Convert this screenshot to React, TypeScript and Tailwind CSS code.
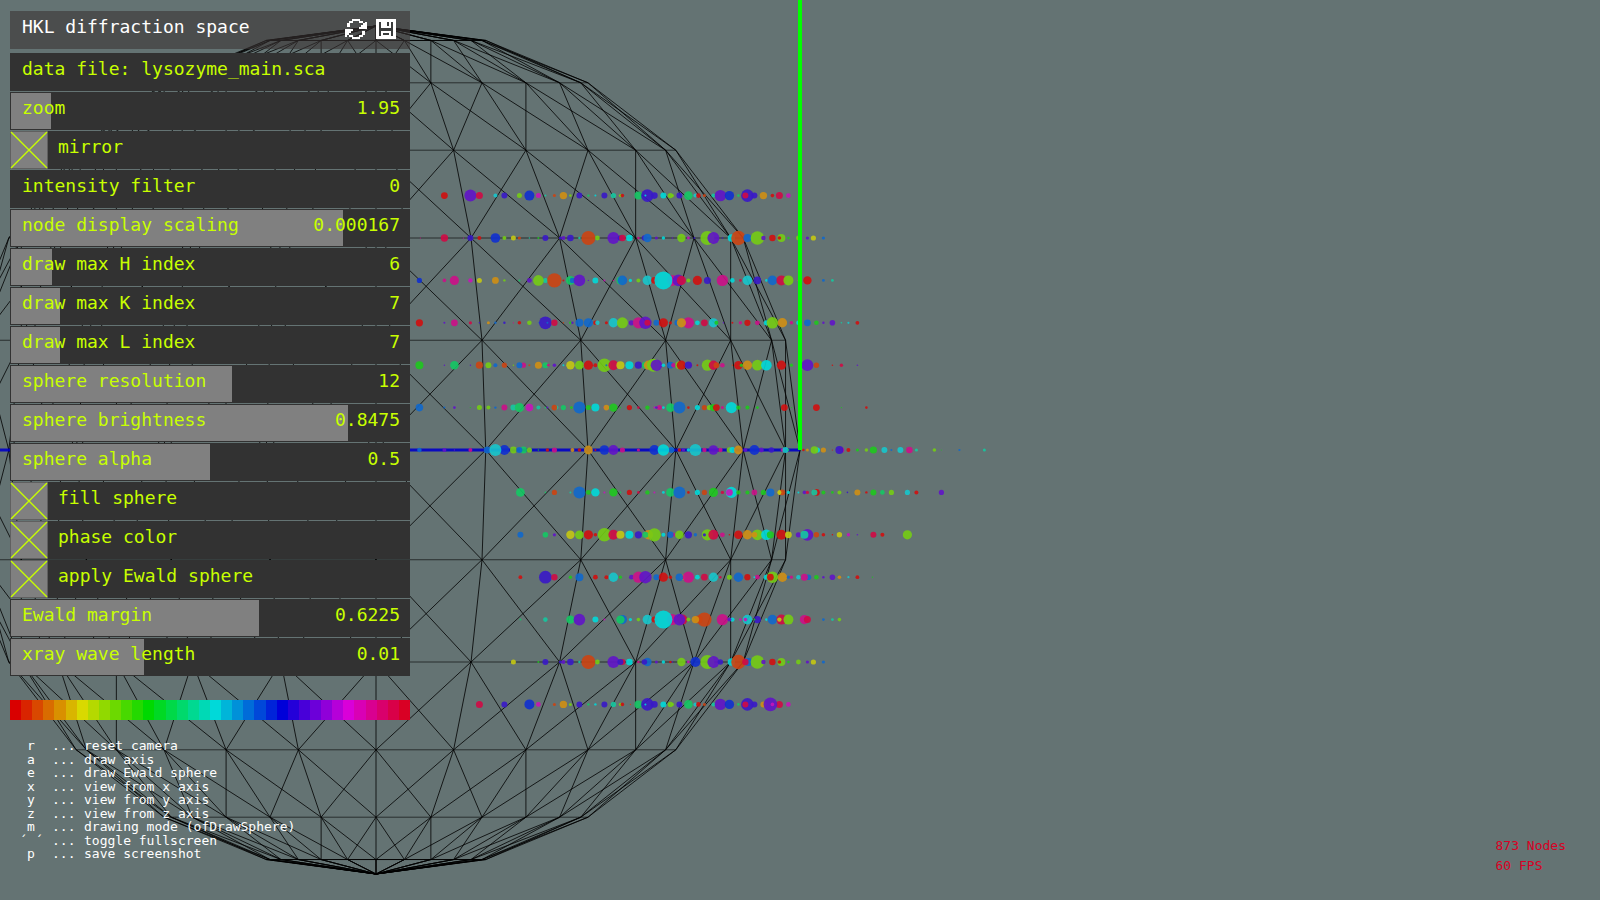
import React, { useState } from "react";

const CX = 376;
const CY = 450;
const RADIUS = 424;
const RINGS = 12;
const ROW_SPACING = 42.4;

const nodeColors: Record<string, string> = {
  r: "#d00f10",
  R: "#d00a45",
  v: "#cc4412",
  o: "#cf8f14",
  y: "#c4c812",
  l: "#74cc14",
  g: "#1ec81e",
  e: "#14c864",
  t: "#14c8a0",
  c: "#00d9d9",
  s: "#16c6cc",
  b: "#1068cc",
  B: "#1030d0",
  i: "#3818c8",
  p: "#6014c8",
  m: "#c814b8",
  k: "#cc1088",
};

// one string per layer, top to bottom; each node is "x,radius,color"
const nodeRows = [
  "444,3.4,r 470,6,p 479,3.5,R 495,2,s 504,3,i 519,2.5,l 529,5,B 538,2.5,m 545,1,t 554,1.5,v 563,3.7,o 570,1.3,l 579,3,i 588,1.2,e 595,1,c 604,3,i 613,2.7,t 620,1.6,l 622,1.8,r 638,4,e 647,6.3,i 645,1,c 654,3.3,i 663,3,c 672,1.6,l 670,2.7,l 679,3,i 688,4.3,e 695,2,s 698,2.3,r 704,1.5,v 713,2,t 720,5.7,p 729,4.7,B 738,1.3,e 747,6.3,i 745,3,R 754,3,i 763,3.7,o 772,1.8,r 779,3.5,R 788,2.3,m",
  "420,.6,k 444,3.7,R 463,.6,m 470,3,i 479,2,r 495,4.8,B 504,2,l 513,2.5,y 519,1.6,v 529,.8,t 538,1,g 545,3,i 560,1.6,i 563,2,p 570,3.3,i 579,1.2,t 588,7,v 597,2.4,l 613,6,p 620,2.7,i 622,3.3,R 629,3.3,c 638,1.3,k 644,2.7,i 647,4.2,b 656,1.5,p 663,1.7,c 672,.8,p 681,4.2,l 688,1.4,m 694,1,i 707,7,l 713,6,p 722,.8,i 731,3.7,c 738,7.2,v 747,4,b 757,6.8,l 763,2.2,p 772,3.2,r 781,4,l 779,1.8,r 788,1.2,g 798,2.4,l 807,1.6,p 813,2.6,y 823,1.6,b",
  "419,2.6,B 444,1.8,k 454,4.6,k 470,2.2,m 479,2.5,y 495,3.4,o 504,1.2,l 519,1,e 529,2.4,p 545,2.5,t 538,5.3,l 554,7.2,v 563,1,r 570,4.5,e 572,2.6,b 579,5.8,p 588,.7,p 597,1.2,v 595,3,c 604,1,m 613,.7,k 620,4,e 622,4.8,b 630,1.6,c 638,2,l 647,4.8,s 654,3.3,r 672,5.5,k 663,9,c 678,5.8,p 681,4.6,R 688,2,l 697,4.6,r 707,3.5,i 722,5.7,k 732,2.3,c 740,1.3,R 747,4.8,s 757,3.8,i 766,1.3,c 772,4.8,b 781,5,R 788,5,l 798,.8,o 807,4.2,r 823,1.4,b 832,1.4,t",
  "419,3.6,r 444,1,p 454,3.4,k 470,1.6,R 479,.8,i 488,1.5,o 495,1.2,b 504,1.2,i 513,.6,k 519,1.8,r 529,2.3,l 539,1,b 545,6.4,i 547,1,b 554,3.2,R 563,.7,v 570,1.4,g 572,1.2,p 579,4,b 588,4.6,b 595,2.2,r 597,2.2,s 606,1.5,r 613,4.7,s 622,5.5,l 631,2.6,p 638,5.6,k 645,6.2,p 647,3,R 656,3,b 663,4.6,r 670,1.6,r 677,3,b 688,5.6,k 681,4.6,o 697,2.4,c 704,3.4,R 713,4.6,s 716,2,g 723,.7,p 732,1,r 740,1.7,k 747,3.1,r 757,2.4,k 766,2.6,c 772,5.8,l 782,4.7,o 791,1.8,k 798,2.2,c 807,3.4,b 816,2.3,g 823,1.2,p 832,2.8,p 841,.8,t 848,1.1,s 857,1.9,r",
  "419,4,g 444,.7,p 454,4.3,e 470,.7,p 479,3.6,v 488,3,l 495,2,b 504,2.6,v 513,.7,l 523,2.6,k 519,3,b 529,1,v 538,3.5,o 545,3,e 548,1.4,k 554,1.8,p 563,1,c 570,4.2,y 579,4.4,l 588,4.6,r 595,2,r 604,6.8,l 606,1,b 613,5,R 620,4,y 629,4,c 638,3.6,i 645,3.6,e 648,4.6,o 653,6.5,l 656,5.8,p 663,1.8,c 670,3.4,b 673,2.2,k 679,4,l 681,4.6,r 690,1.8,k 688,3.6,i 697,1,r 707,5.6,l 713,4.7,R 716,3,v 722,2.3,k 732,.6,v 738,4.3,r 741,1.7,g 747,4.7,o 757,5.4,l 766,5.3,c 781,4.6,r 791,1.6,g 807,5.9,p 816,2.7,v 832,.8,r 841,1.7,R 857,.8,p",
  "419,3.8,b 444,1,b 454,1.4,p 470,.7,g 479,2.5,l 488,2,l 495,1.2,b 504,3,k 513,3,t 519,4.6,e 529,3.8,m 538,2,t 545,.9,e 547,1,p 556,2,t 554,2.8,v 563,2.6,e 571,1.4,g 579,6,b 588,2.5,g 595,4,c 604,1,m 606,2.8,o 613,4.2,g 620,.7,g 629,2.6,r 638,1.3,R 647,2.2,g 654,1,m 659,2.5,k 656,1.4,p 663,1.4,c 670,4.3,e 679,6,b 688,1.3,r 697,2.6,c 704,2.6,v 709,2.6,l 713,3.6,g 716,3.4,r 722,1.5,k 731,5.6,c 738,2.2,g 747,2,g 757,1.4,g 784,3.4,r 791,.7,g 816,3.4,r 841,.6,g 866,1.3,r",
  "419,2.3,b 444,2,p 454,.8,p 470,2,k 487,3.6,b 504,5,B 495,6,s 513,3.4,l 523,3.6,e 519,3,b 529,2.6,l 538,.7,g 547,1.7,r 554,2.6,k 572,2,o 579,1.8,r 588,4.4,o 595,1,r 604,4.8,B 613,5,p 622,2.6,k 638,1.6,k 654,5,B 671,3,b 663,5.8,c 679,1.8,r 683,1.8,p 688,1.7,c 704,2.2,k 695,6,s 713,4.8,p 720,2.2,k 729,2.8,l 732,3,c 738,4.4,o 745,2,p 761,2.4,p 754,5,B 771,2.8,i 782,1.8,k 785,3,s 788,1,e 803,1.3,r 807,1.5,o 817,2.6,c 814,3.8,l 823,2.6,o 832,.6,r 841,2.8,k 839,4,i 848,2,r 857,1.6,g 866,1.8,l 873,3.6,g 884,3,s 891,1,b 900,3,s 909,3.3,k 916,1.6,t 934,1.8,l 941,.5,g 959,1.1,b 984,1.5,t",
  "520,4.4,e 545,.8,e 554,2.6,v 570,1,t 579,6,b 588,2.4,g 595,4.2,c 604,1,m 613,4.2,g 620,.8,e 629,2.6,r 638,1.3,R 647,2.2,g 654,1,m 663,1.4,c 670,4.3,e 679,6,b 688,1.3,r 697,2.6,c 704,2.6,v 713,4.6,g 722,1.7,R 731,5.6,c 729,3.4,m 738,2.2,g 747,2,g 754,2.8,k 763,2.6,g 770,4,b 780,2.7,y 782,2.8,v 779,2,y 788,1.6,c 798,1,c 804,1.8,p 807,1.6,R 816,3.4,r 814,3,t 823,2,g 832,1.3,g 839,2,l 847,.8,i 857,3,o 866,1.2,r 873,3,g 882,2.3,e 891,2.6,l 907,2.6,s 916,2,r 941,2.6,p",
  "520,3,b 545,2.8,e 554,1.6,p 570,4.2,y 579,4.4,l 588,4.6,r 595,1.8,r 604,6.8,l 613,5,R 620,4,y 629,4,c 638,3.6,i 648,4.7,o 645,3,e 654,6.6,l 663,2,c 673,2,k 670,3.2,b 679,4.3,l 688,3.6,i 695,1.7,b 707,5.6,l 704,1.6,i 713,5,R 722,2.4,k 729,.8,r 738,4.3,r 747,4.7,o 757,5.4,l 754,2.8,o 766,5.3,c 770,3.6,g 781,5,r 788,3.4,y 798,2.6,p 807,5.9,p 804,4,t 816,2.7,v 823,1.8,r 832,.8,r 839,2.7,y 848,1.7,m 857,.8,p 873,3,R 882,2,r 907,4.6,l",
  "520,1.9,r 545,6.4,i 554,3.2,R 570,1.7,g 579,4,b 595,2.4,r 606,2,r 613,4.7,s 620,1.6,g 631,2.4,p 638,5.6,k 645,6.2,p 656,3,b 663,4.6,r 670,1.7,r 682,2.8,o 679,3.8,b 688,5.6,k 697,2.4,c 704,3.4,R 713,4.6,s 720,1.2,R 729,2.5,l 738,4.7,b 747,3.1,r 757,2.4,k 754,1,c 766,2.6,c 772,5.8,l 770,3.4,r 782,4.7,o 788,1.6,b 791,1.6,k 798,2.2,s 808,2.8,b 804,3.5,k 816,2.3,g 823,1.2,p 832,2.8,p 839,1.8,o 848,1.1,s 857,1.9,r 872,.6,g",
  "520,1,e 545,2.3,t 570,4.2,e 579,5.8,p 595,3,c 604,1,m 622,4.6,b 620,4.2,e 630,1.6,c 638,1.8,l 647,4.8,s 654,3,r 672,5.5,k 682,5,R 663,9,c 679,5.8,p 688,2,l 704,7.2,v 698,4,v 695,3.7,o 722,5.7,k 732,2.2,c 729,2,p 740,1.3,m 747,4.8,s 745,1.8,m 757,3.6,i 754,1,g 766,1.3,c 772,4.8,b 781,5,R 779,2.2,y 788,5,l 804,4.6,k 807,3.5,R 823,1.4,b 832,1.4,t 839,1.8,l",
  "513,2.5,y 538,1,g 545,3,i 560,1.6,i 563,2,p 570,3.3,i 579,1.2,t 588,7,v 597,2.4,l 613,6,p 622,3,R 620,3,i 629,3.3,c 638,1.3,k 647,4.2,b 644,2.8,i 656,1.5,p 663,1.7,c 670,1.3,r 672,.8,p 681,4.2,l 688,1.4,m 695,5,B 707,7,l 713,6,p 720,2.7,i 731,3.7,c 748,4,b 738,7.2,v 745,3.2,R 757,6.8,l 763,2.2,p 772,3.2,r 781,4,l 779,1.8,r 788,1.2,g 798,2.4,l 807,1.6,p 813,2.6,y 823,1.6,b",
  "479,3.5,R 504,3,i 529,5,B 538,2.4,m 554,1.5,v 563,3.7,o 570,1.5,l 579,3,i 588,1.2,e 595,1.2,c 604,3,i 613,2.7,t 620,1.6,l 622,1.8,r 630,.6,v 638,4,e 647,6.3,i 645,1,c 654,3.3,i 663,3,c 672,1.6,l 670,2.7,l 679,3,i 688,4.3,e 695,2,s 698,2.3,r 704,1.5,v 713,2,t 720,5.7,p 729,4.7,B 738,1.3,e 747,6.3,i 745,3,R 754,3,i 763,3,o 779,3.5,R 770,6.8,p 772,1.8,m 788,2.3,m",
];

const point = (ring: number, seg: number) => {
  const ringRadius = RADIUS * Math.sin((ring * Math.PI) / RINGS);
  const x = CX + ringRadius * Math.sin((seg * Math.PI) / RINGS);
  const y = CY - RADIUS * Math.cos((ring * Math.PI) / RINGS);
  return `${x.toFixed(2)} ${y.toFixed(2)}`;
};

const buildFaces = () => {
  let d = "";
  for (let ring = 0; ring < RINGS; ring++) {
    for (let seg = -6; seg <= 6; seg++) {
      d += `M${point(ring, seg)}L${point(ring + 1, seg)}`;
      if (seg < 6) {
        d += `M${point(ring, seg)}L${point(ring + 1, seg + 1)}`;
        d += `M${point(ring, seg + 1)}L${point(ring + 1, seg)}`;
      }
    }
  }
  return d;
};

// the equator is left out, the z axis runs along it
const buildRings = () =>
  [2, 3, 4, 5, 7, 8, 9, 10].map((ring) => `M${point(ring, -6)}L${point(ring, 6)}`).join("");

const Scene: React.FC = () => (
  <svg
    className="absolute inset-0 h-full w-full"
    viewBox="0 0 1600 900"
    preserveAspectRatio="xMinYMid slice"
    aria-label="Diffraction nodes and Ewald sphere"
  >
    <g fill="none" stroke="#000">
      <path d={buildFaces()} strokeOpacity="0.8" />
      <path d={buildRings()} strokeOpacity="0.6" />
      <path d={`M${point(1, -6)}L${point(1, 6)}M${point(11, -6)}L${point(11, 6)}`} />
    </g>
    <path d="M0 450H800" stroke="#0000c8" strokeWidth="3" strokeOpacity="0.9" />
    {nodeRows.map((nodes, row) => (
      <g key={row} transform={`translate(0.4 ${CY + (row - 6) * ROW_SPACING})`} fillOpacity="0.9">
        {nodes.split(" ").map((node, index) => {
          const [x, r, color] = node.split(",");
          return <circle key={index} cx={x} r={r} fill={nodeColors[color]} />;
        })}
      </g>
    ))}
    <path d="M800 0V450" stroke="#00ff00" strokeWidth="4" />
  </svg>
);

interface SliderProps {
  label: string;
  initial: number;
  min: number;
  max: number;
  digits?: number;
}

const Slider: React.FC<SliderProps> = ({ label, initial, min, max, digits = 0 }) => {
  const [value, setValue] = useState(initial);
  const fill = ((value - min) / (max - min)) * 100;

  return (
    <label className="relative block h-[38px] bg-[#323232] p-px">
      <span className="block h-9 bg-[#808080]" style={{ width: `${fill}%` }} />
      <span className="absolute inset-0 flex justify-between pr-[10px] pl-3 leading-8">
        <span>{label}</span>
        <span>{Number(value.toFixed(digits))}</span>
      </span>
      <input
        type="range"
        className="absolute inset-0 h-full w-full cursor-pointer opacity-0"
        min={min}
        max={max}
        step="any"
        value={value}
        onChange={(e) => setValue(Number(e.target.value))}
      />
    </label>
  );
};

const Toggle: React.FC<{ label: string }> = ({ label }) => {
  const [checked, setChecked] = useState(true);

  return (
    <label className="relative flex h-[38px] cursor-pointer gap-[10px] bg-[#323232] leading-8">
      <input
        type="checkbox"
        className="h-[38px] w-[38px] appearance-none border border-[#606060] bg-[#808080]"
        checked={checked}
        onChange={(e) => setChecked(e.target.checked)}
      />
      {checked && (
        <svg className="pointer-events-none absolute top-0 left-0 h-[38px] w-[38px]" viewBox="0 0 38 38">
          <path d="M1 1L37 37M37 1L1 37" stroke="#c8ff00" strokeWidth="1.4" />
        </svg>
      )}
      <span>{label}</span>
    </label>
  );
};

const HueBar: React.FC = () => (
  <div className="mt-6 flex h-5">
    {Array.from({ length: 36 }, (_, i) => (
      <span key={i} className="flex-1" style={{ backgroundColor: `hsl(${i * 10}, 100%, 42.5%)` }} />
    ))}
  </div>
);

const shortcuts = [
  ["r", "reset camera"],
  ["a", "draw axis"],
  ["e", "draw Ewald sphere"],
  ["x", "view from x axis"],
  ["y", "view from y axis"],
  ["z", "view from z axis"],
  ["m", "drawing mode (ofDrawSphere)"],
  ["´ ´", "toggle fullscreen"],
  ["p", "save screenshot"],
];

const App: React.FC = () => {
  return (
    <div className="relative flex min-h-screen items-end justify-between overflow-hidden bg-[#647373] font-['DejaVu_Sans_Mono',monospace]">
      <Scene />
      <aside className="relative w-[410px] self-start pt-[11px] pl-[10px]">
        <header className="flex h-[38px] justify-between bg-[#3a3434]/60 pr-[14px] pl-3 text-lg leading-8 text-white">
          <h1>HKL diffraction space</h1>
          <div className="flex h-9 items-center gap-[9px]">
            <button type="button" aria-label="Reload settings">
              <svg className="block h-5 w-[22px]" viewBox="0 0 22 20" fill="#fff" shapeRendering="crispEdges">
                <path d="M7 0h8v2h-8zM4 2h4v2h-4zM14 2h4v2h-4zM20 3h2v7h-8v-2h2v-2h2v-2h2zM2 4h3v4h-3zM0 10h8v2h-2v2h-2v2h-2v2h-2zM17 12h3v4h-3zM14 16h4v2h-4zM4 16h4v2h-4zM7 18h8v2h-8z" />
              </svg>
            </button>
            <button type="button" aria-label="Save settings">
              <svg className="block h-5 w-5" viewBox="0 0 20 20" shapeRendering="crispEdges">
                <path fill="#fff" d="M0 0h20v20h-20z" />
                <path fill="#3a3c3c" d="M3 3h2v6h10v-6h2v14h-2v-5h-10v5h-2zM11 3h2v4h-2zM7 14h6v2h-6z" />
              </svg>
            </button>
          </div>
        </header>
        <div className="mt-1 flex flex-col gap-px text-lg text-[#c8ff00]">
          <p className="h-[38px] bg-[#323232] pl-3 leading-8">data file: lysozyme_main.sca</p>
          <Slider label="zoom" initial={1.95} min={1} max={10.5} digits={2} />
          <Toggle label="mirror" />
          <Slider label="intensity filter" initial={0} min={0} max={100} />
          <Slider label="node display scaling" initial={0.000167} min={0} max={0.0002} digits={6} />
          <Slider label="draw max H index" initial={6} min={1} max={50} />
          <Slider label="draw max K index" initial={7} min={1} max={50} />
          <Slider label="draw max L index" initial={7} min={1} max={50} />
          <Slider label="sphere resolution" initial={12} min={2} max={20} />
          <Slider label="sphere brightness" initial={0.8475} min={0} max={1} digits={4} />
          <Slider label="sphere alpha" initial={0.5} min={0} max={1} digits={4} />
          <Toggle label="fill sphere" />
          <Toggle label="phase color" />
          <Toggle label="apply Ewald sphere" />
          <Slider label="Ewald margin" initial={0.6225} min={0} max={1} digits={4} />
          <Slider label="xray wave length" initial={0.01} min={0} max={0.03} digits={4} />
        </div>
        <HueBar />
        <ul className="mt-[19px] flex h-[121px] flex-col justify-between text-[13px] leading-[13px] whitespace-pre text-white">
          {shortcuts.map(([key, action]) => (
            <li key={action} className="flex">
              <kbd className="w-[42px] text-center font-['DejaVu_Sans_Mono',monospace]">{key}</kbd>
              <span className="w-8">...</span>
              <span>{action}</span>
            </li>
          ))}
        </ul>
      </aside>
      <div className="relative pr-[34px] pb-6 text-[13px] leading-5 text-[#d90024]">
        <p>873 Nodes</p>
        <p>60 FPS</p>
      </div>
    </div>
  );
};

export default App;
